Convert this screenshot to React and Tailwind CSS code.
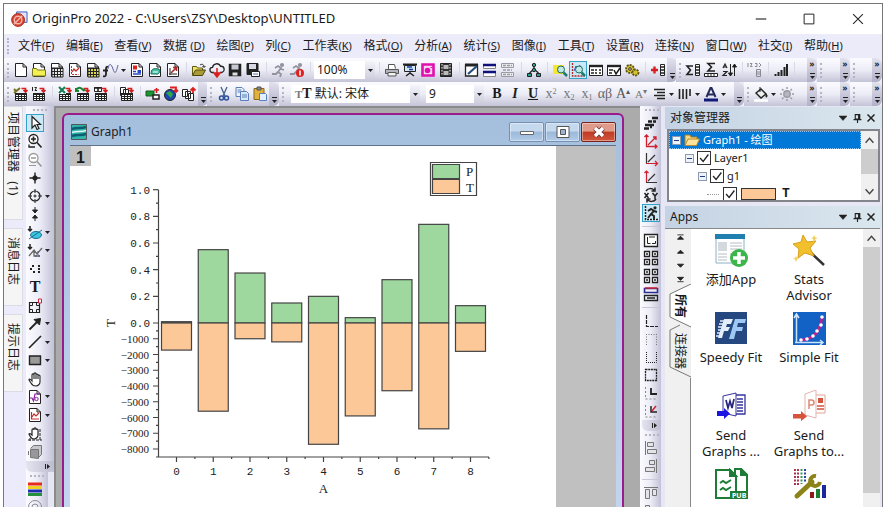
import { useState } from 'react'
import clsx from 'clsx'

const Ico = ({ children, className = 'h-4 w-4' }) => (
  <svg viewBox="0 0 16 16" className={clsx('shrink-0', className)} fill="none" stroke="#222" aria-hidden="true">
    {children}
  </svg>
)

// Pieces shared by several toolbar glyphs
const sheet = <path d="M2.500 1.500h7.500l3.500 3.500v9.500h-11zM10 1.500v3.500h3.500" fill="#fff" />
const table = (
  <g>
    <path d="M2.500 7.500h11v7h-11z" fill="#fff" />
    <path d="M2 8h12" strokeWidth="2" />
    <path d="M2.500 10.500h11M2.500 12.500h11M5.500 8v6M8.500 8v6M11.500 8v6" />
  </g>
)
const cells = <path d="M3 6.500h11M3 9.500h11M3 12.500h11M5.500 6v9M8.500 6v9M11.500 6v9" strokeWidth="1.200" />
const redHook = <path d="M8.500 2.500h4v3M10.500 4l2 2 2-2" stroke="#d81e1e" strokeWidth="1.600" />
const magnifier = (
  <g>
    <circle cx="9" cy="7.500" r="3.500" fill="#bfeae4" stroke="#1c6c64" />
    <path d="M11.500 10.500l3.500 3.500" stroke="#1c7c70" strokeWidth="2.500" />
  </g>
)
const runner = (
  <g stroke="#9393a0" strokeWidth="1.800">
    <circle cx="11" cy="3" r="1.200" fill="#9393a0" />
    <path d="M4 6l3-2 3 2-3 4 3 2-1 3M7 10l-2 2H1M10 7l3 1" />
  </g>
)

const icons = {
  newProject: sheet,
  newFolder: (
    <g>{sheet}<path d="M1.500 6.500h4l1 1.500h8v6h-13z" fill="#f4ef52" stroke="#777a20" /></g>
  ),
  newBook: <g>{sheet}<path d="M3 6h11v9H3z" fill="#fff" />{cells}</g>,
  newGraph: <g>{sheet}<path d="M4.500 4v8.500h7" stroke="#b33" strokeDasharray="2 1" /><path d="M5 10l2-3 2 2 3-3" stroke="#c03030" strokeWidth="1.300" /></g>,
  newMatrix: <g>{sheet}<path d="M3 6h11v9H3z" fill="#f2ee50" />{cells}</g>,
  newFunction: (
    <g>
      <path d="M5 5c-2-1-2 1-2 3v4c0 2-1 3-3 2M0 8.500h5" strokeWidth="1.800" />
      <path d="M5 7c1-6 3-6 5 0s3 4 5-4" stroke="#5b5f94" />
    </g>
  ),
  newLayout: (
    <g>{sheet}<path d="M4 3.500h4v4H4z" fill="#d22" stroke="none" /><path d="M8.500 8h3.500v3H8.500z" fill="#2748c8" stroke="none" /><path d="M4 9.500h3M4 12h8" stroke="#2748c8" strokeWidth="1.500" /></g>
  ),
  newNotes: <g>{sheet}<path d="M4 12c0-5 2-6 8-5 2 2 0 6-3 5z" fill="#4dbfa6" stroke="#15705f" /><path d="M6 10h5" stroke="#fff" /></g>,
  digitize: <g>{sheet}<path d="M5 13V6M4 12h8" /><path d="M6 11l5-5M8 5.500h3.500V9" stroke="#b02828" strokeWidth="1.600" /></g>,
  open: (
    <g><path d="M1.500 13V4.500h4l1 1.500h5v2" fill="#f1e36c" stroke="#5f5b12" /><path d="M1.500 13.500l3-5.500h10l-3 5.500z" fill="#a99b36" stroke="#4a470f" /><path d="M9 3c2-1.500 4-.500 4 2M11.500 4l1.500 1.500L14.500 4" /></g>
  ),
  cloud: (
    <g><path d="M5 10.500H3.500a2.600 2.600 0 010-5.200 4.200 4.200 0 018-1 3.100 3.100 0 011 6.200H11" strokeWidth="1.300" /><path d="M8 6v7M5 11l3 4 3-4z" stroke="#d81e1e" fill="#d81e1e" strokeWidth="1.500" /></g>
  ),
  save: <g><path d="M2.500 2.500h11v11h-11z" fill="#222" strokeWidth="1.500" /><path d="M4.500 2.500v5h7v-5z" fill="#c8c8d4" stroke="none" /><path d="M5.500 10.500h5v3h-5z" fill="#ddd" stroke="none" /></g>,
  saveAll: <g><path d="M2 1.500h11v11H2z" fill="#222" /><path d="M4 2v5h7V2z" fill="#d8d8e4" stroke="none" /><path d="M6.500 9.500h8v5h-8z" fill="#fff" /><path d="M8 12h5" stroke="#4a6bd0" /></g>,
  run: runner,
  stop: <g>{runner}<circle cx="11" cy="11" r="4" fill="#e02020" stroke="none" /><path d="M11 8.500v5" stroke="#fff" strokeWidth="1.500" /></g>,
  print: (
    <g><path d="M4.500 7V2.500h6l1 4" fill="#fff" stroke="#555" /><path d="M1.500 7.500h13v4h-13z" fill="#b5b5bf" stroke="#555" /><path d="M4 10.500h8v3.500H4z" fill="#f2f2f2" stroke="#555" /></g>
  ),
  slides: <g><path d="M1 2.500h14" strokeWidth="2" /><path d="M2.500 3.500h11v6h-11z" fill="#cfe6f7" /><path d="M5 5h5M7 7.500h4" stroke="#1c3c9c" strokeWidth="1.500" /><path d="M8 10v2M4 14l4-3 4 3" strokeWidth="1.500" /></g>,
  capture: <g><path d="M2.500 2.500h11v11h-11z" fill="#fbd8f2" stroke="#e010b0" strokeWidth="2.600" /><circle cx="7.500" cy="8.500" r="2.800" fill="#e010b0" stroke="none" /><path d="M10.500 5.500h2" stroke="#e010b0" /></g>,
  film: <g><path d="M2.500 1.500h11v13h-11z" fill="#333" /><path d="M5.500 3h5v4h-5zM5.500 9h5v4h-5z" fill="#bbb" stroke="none" /><path d="M4 2v12M12 2v12" stroke="#fff" strokeDasharray="1.500 1.500" /></g>,
  edit: <g><path d="M1.500 3h12v11h-12z" fill="#fff" strokeWidth="1.300" /><path d="M1 3h13" strokeWidth="3" /><path d="M4 12l9-8" stroke="#264b7b" strokeWidth="2.200" /></g>,
  bars: <g><path d="M1.500 2.500h12v4h-12zM1.500 10.500h12v4h-12z" fill="#fff" stroke="#888" /><path d="M1 3h13M1 10h13" stroke="#10107c" strokeWidth="2.500" /></g>,
  barsOff: <g stroke="#9a9aa6"><path d="M1.500 1.500h12v4h-12zM1.500 10.500h12v4h-12z" fill="#eee" /><path d="M3 3.500h9M3 8h9M3 12.500h9" strokeWidth="1.500" strokeDasharray="3 1" /></g>,
  tree: <g><path d="M8 4v4M3.500 11l4.500-4 4.500 4" strokeWidth="1.300" /><circle cx="8" cy="3" r="1.700" fill="#2aa08c" /><circle cx="8" cy="8" r="1.700" fill="#2aa08c" /><path d="M1.500 11.500h4v3h-4zM10.500 11.500h4v3h-4z" fill="#2aa08c" /></g>,
  findBook: <g><path d="M1 3h11v9H1z" fill="#f5e631" stroke="none" />{magnifier}</g>,
  zoomGraph: <g><path d="M2.500 1v13h12" stroke="#b02a2a" strokeWidth="1.300" strokeDasharray="2 1" /><path d="M4 9l2-5 2 3 2-4" stroke="#284fc0" />{magnifier}</g>,
  results: <g><path d="M1.500 3.500h13v10h-13z" fill="#fff" /><path d="M1 4h14" strokeWidth="2.400" /><path d="M3 8h3M7 8h2M11 8h2M3 11h3M7 11h2M11 11h2" strokeWidth="1.400" /></g>,
  script: <g><path d="M1.500 3.500h13v10h-13z" fill="#fff" /><path d="M1 4h14" strokeWidth="2.400" /><path d="M3 8h4M3 11h3" strokeWidth="1.400" /><path d="M8 8l2 4 4-6" stroke="#1c1c1c" strokeWidth="1.500" /></g>,
  gear: <g><circle cx="6" cy="7" r="4" fill="#d8c12e" stroke="#5c5414" strokeWidth="1.800" strokeDasharray="2 1" /><circle cx="6" cy="7" r="1.300" fill="#fff" /><circle cx="11.500" cy="10.500" r="3" fill="#d8c12e" stroke="#5c5414" strokeWidth="1.800" strokeDasharray="2 1" /></g>,
  addColumn: <g><path d="M1 8h7M4.500 4.500v7" stroke="#d81e1e" strokeWidth="2.400" /><path d="M10.500 2.500h4v11h-4z" fill="#fff" /><path d="M10 5h5M10 8h5M10 11h5" strokeWidth="1.300" /></g>,
  sumColumn: <g><path d="M8 4H2l3.500 4L2 12.500h6" strokeWidth="1.600" /><path d="M10.500 2.500h4v11h-4z" fill="#fff" /><path d="M10 5h5M10 8h5M10 11h5" strokeWidth="1.300" /></g>,
  sumRow: <g><path d="M12 1.500H5l3.500 3.500L5 9h7" strokeWidth="1.600" /><path d="M1.500 11.500h13v3h-13z" fill="#fff" /><path d="M5 11v4M8 11v4M11 11v4" /></g>,
  sort: <g><path d="M2 6l2-4 2 4M2.500 5h3M2 9.500h4l-4 4h4" strokeWidth="1.200" /><path d="M9.500 2v11M7.500 11l2 3 2-3zM13.500 3v11M11.500 5l2-3 2 3z" fill="#222" /></g>,
  rowNumber: <g stroke="#8a8a96"><path d="M1 1v4M3 1.500h2L3.500 4.500h2M8 1.500h2v3H8M12 1l2 2-2 2" /><path d="M9.500 7.500h4v7h-4zM9 10h5M9 12h5" /></g>,
  signal: <path d="M2.500 14v-2M5.500 14v-4M8.500 14V8M11.500 14V5M14 14V2" strokeWidth="2" />,

  wizard: <g>{table}<path d="M1 7l6-5M1 3l2 2" stroke="#77711b" strokeWidth="2" />{redHook}</g>,
  ascii: <g>{table}<path d="M1.500 1v4M3.500 1.500h2L4 4.500h2" />{redHook}</g>,
  excel: <g>{table}<path d="M1 1h8v7H1z" fill="#fff" stroke="none" /><path d="M2 1l6 6M8 1L2 7" stroke="#16805a" strokeWidth="2.200" />{redHook}</g>,
  database: <g>{table}<path d="M1 4c2-3 5-3 7 0M1 2v3h3M8 5l2-2" stroke="#188530" strokeWidth="2.200" />{redHook}</g>,
  webData: <g>{table}<path d="M1.500 1.500h7v4h-7z" fill="#fff" /><path d="M1 2h8M5 2v4" strokeWidth="1.600" />{redHook}</g>,
  multiple: <g><path d="M1.500 1.500h5v8h-5zM4.500 3.500h5v8h-5z" fill="#fff" />{table}{redHook}</g>,
  connector: <g><path d="M1 5h8v5H1z" fill="#1b9433" stroke="#165c20" /><path d="M8 9h6v4H8z" fill="#fff" strokeWidth="1.500" /><path d="M9 4h5M11.500 2v5" stroke="#d81e1e" strokeWidth="1.600" /></g>,
  globe: <g><circle cx="7" cy="9" r="5.500" fill="#1f46ae" /><path d="M3 7l4-2 3 3-2 4z" fill="#2ba847" stroke="none" /><path d="M7 1.500h6v4M11 4l2 2 2-2" stroke="#e02020" strokeWidth="1.800" /></g>,
  slidesOut: <g><path d="M1.500 3.500h5v7h-5zM4.500 5.500h5v7h-5zM7.500 7.500h5v7h-5z" fill="#fff" /><path d="M12 7V2M9.500 4.500L12 2l2.500 2.500" stroke="#e02020" strokeWidth="1.800" /></g>,
  cut: <g><path d="M5 1l4 9M11 1L7 10" stroke="#44608e" strokeWidth="1.300" /><circle cx="5.500" cy="12" r="2" stroke="#2c4f9c" strokeWidth="1.500" /><circle cx="10.500" cy="12" r="2" stroke="#2c4f9c" strokeWidth="1.500" /></g>,
  copy: <g stroke="#5b7fb8"><path d="M2 1.500h6l2 2v7H2z" fill="#eaf3ff" /><path d="M6.500 5.500h6l2 2v7h-8z" fill="#d6e7fc" /><path d="M8 9h5M8 11h5M3.500 4h4M3.500 6h3" /></g>,
  paste: <g><path d="M2 2.500h10v11H2z" fill="#e0b23c" stroke="#8c6a1a" /><path d="M5 1h4v3H5z" fill="#888" stroke="#555" /><path d="M7.500 7.500h6l1 1v6h-7z" fill="#e4efff" stroke="#5b7fb8" /></g>,
  align: <path d="M3 3.500h11M6 6.500h8M3 9.500h11M6 12.500h8" strokeWidth="1.600" />,
  columns: <path d="M2.500 3v10M6 3v10M9.500 3v10M13 3v7" strokeWidth="1.600" />,
  fontColor: <g><path d="M3.500 11L7.500 2h1l4 9M5 8.500h6" stroke="#222a5a" strokeWidth="2" /><path d="M1 14h14" stroke="#111a78" strokeWidth="3" /></g>,
  fill: <g><path d="M3 7l5-4 5 5-5 4z" fill="#eee" strokeWidth="1.400" /><path d="M7 6V1M13 8c2 2 1 3 0 3z" fill="#222" /><path d="M1 14.500h14" stroke="#fff" strokeWidth="2.500" /></g>,
  light: <g stroke="#9a9aa4" strokeWidth="1.400"><circle cx="8" cy="8" r="3.200" fill="#b6b6c0" /><path d="M8 1v2M8 13v2M1 8h2M13 8h2M3 3l1.500 1.500M11.500 11.500L13 13M13 3l-1.500 1.500M4.500 11.500L3 13" /></g>,

  pointer: <path d="M5 1.500v11.500l3-3 2 4.500 2-1-2-4h3.500z" fill="#fff" strokeWidth="1.200" />,
  zoomIn: <g><circle cx="6.500" cy="6" r="4.500" strokeWidth="1.300" fill="#fff" /><path d="M4 6h5M6.500 3.500v5M10 9.500l4.500 5" strokeWidth="1.600" /><path d="M2 11.500v2.500h6" strokeWidth="1.300" /></g>,
  zoomOut: <g stroke="#999"><circle cx="6.500" cy="6" r="4.500" strokeWidth="1.300" fill="#fff" /><path d="M4 6h5M10 9.500l4.500 5" strokeWidth="1.600" /><path d="M2 13.500h7" /></g>,
  cross: <g><path d="M8 2.500v11M2.500 8h11" strokeWidth="1.400" /><circle cx="8" cy="8" r="2.200" fill="#222" /></g>,
  target: <g><circle cx="8" cy="8" r="5" strokeWidth="1.200" /><path d="M8 1v4M8 11v4M1 8h4M11 8h4M6.500 8h3M8 6.500v3" /></g>,
  collapse: <g fill="#222"><path d="M8 1v5M5.500 4L8 7l2.500-3zM8 15v-5M5.500 12L8 9l2.500 3z" /></g>,
  mask: <g><path d="M3 1v5M1 4l2 2 2-2" strokeWidth="1.500" /><ellipse cx="9" cy="10" rx="5.500" ry="3.500" fill="#3cc4dc" stroke="#1a6f94" /><path d="M2 14L15 5" stroke="#1a6f94" /></g>,
  region: <g><path d="M3 1v5M1 4l2 2 2-2" strokeWidth="1.500" /><path d="M2 13l5-6 3 4 5-6M7 7v6h6" stroke="#666" strokeWidth="1.300" /><path d="M8 13h6M11 8v4" stroke="#4b5180" strokeDasharray="2 1" /></g>,
  points: <path d="M5 5h2M3 8h2M6 11h2M11 5h2M11 8h2M11 11h2" strokeWidth="1.800" />,
  dataBox: <g><path d="M2.500 4.500h10v10h-10z" strokeWidth="1.200" /><path d="M5.500 5v2.500H3M9.500 5v2.500h3M5.500 14v-2.500H3M9.500 14v-2.500h3" /><path d="M11.500 1h3v4h-3z" fill="#fff" stroke="#d02040" /></g>,
  arrow: <g><path d="M2.500 13.500L11 5" strokeWidth="1.800" /><path d="M7 3.500l6.500-1-1 6.500z" fill="#222" /></g>,
  line: <path d="M2 14L14 2" strokeWidth="1.600" />,
  rect: <path d="M2.500 4h11v8.500h-11z" fill="#9a9a9a" strokeWidth="1.400" />,
  hand: <path d="M5 8V4c0-1.500 2-1.500 2 0V3c0-1.500 2-1.500 2 0v1c0-1.500 2-1 2 0v1c0-1.500 2-1 2 0v6c0 2-2 4-4 4s-4-1-5-3L2 9c0-1.500 1.500-1 3 1zM7 4v4M9 4v4M11 5v3" fill="#fff" strokeWidth="1.100" />,
  formula: <g>{sheet}<path d="M3 9h2l1.500 3L8 5h5" stroke="#8a20a0" strokeWidth="1.200" /><circle cx="9.500" cy="10" r="1.700" stroke="#8a20a0" /></g>,
  insertGraph: <g>{sheet}<path d="M4.500 5v7h7.500M5 10l2-3 2 2 3-3" stroke="#c03030" strokeWidth="1.200" /></g>,
  grab: <g><path d="M5 8V4c0-1.500 2-1.500 2 0V3c0-1.500 2-1.500 2 0v1c0-1.500 2-1 2 0v5c0 2-2 4-4 4s-3-1-4-3l-1-2c1-1 2 0 3 1z" fill="#fff" strokeWidth="1.200" /><path d="M1 14h14M13 3v12M3 15v-3" strokeDasharray="3 1" /></g>,
  cube: <g stroke="#777"><path d="M3.500 4.500l3-3h8v9l-3 3" fill="#c8c8cc" /><path d="M3.500 5.500h8v9l-8-1z" fill="#98989c" /><path d="M1.500 7v4" /></g>,
  palette: <g strokeWidth="3"><path d="M1 3h14" stroke="#e82a1a" /><path d="M1 6.500h14" stroke="#f0d020" /><path d="M1 10h14" stroke="#1d2fae" /><path d="M1 13.500h14" stroke="#26903e" /></g>,
  ring: <g stroke="#8b8b96"><circle cx="8" cy="8" r="6.500" /><circle cx="8" cy="8" r="3" /></g>,

  stair: <path d="M1 13.500h5M3 10h5M8 10h3M2 10h3M5 6.500h4M10 6.500h3M9 3h6M7 12h2" strokeWidth="2.600" />,
  axesXY: <g stroke="#d02030" strokeWidth="1.300"><path d="M3.500 14V2M1.500 4l2-2 2 2M3 13.500h11M12 11.500l2 2-2 2M5 12l8-8M10 4h3v3" /></g>,
  axesX: <g strokeWidth="1.200"><path d="M3.500 2v10M5 11l7-7" stroke="#333" /><path d="M3 12.500h11M12 10l2.500 2.500L12 15" stroke="#d02030" /></g>,
  axesY: <g strokeWidth="1.200"><path d="M3 13.500h11M5 12l7-7" stroke="#333" /><path d="M3.500 13V2M1.500 4l2-2 2 2" stroke="#d02030" /></g>,
  swap: <g strokeWidth="1.500"><path d="M3 4c2-3 6-3 8-1M12 .500v3.500H8.500M13 12c-2 3-6 3-8 1M4 15.500v-3.500h3.500" /><path d="M1.500 6l4 5M5.500 6l-4 5M9.500 6l2.500 3 2.500-3M12 9v3" /></g>,
  fastRun: <g><path d="M2.500 1v13.500h13" strokeWidth="1.500" strokeDasharray="2 1" /><path d="M5 6l3-2 3 2-3 3 3 2v3M8 9l-3 4M11 6l3 1" strokeWidth="1.900" /><circle cx="12" cy="2.800" r="1.600" fill="#222" stroke="none" /></g>,
  layer1: <g><path d="M1.500 2.500h13v12h-13z" fill="#fff" strokeWidth="1.300" /><path d="M4.500 5v6.500h3M9 11.500h3.500V9M6 5h6" /></g>,
  layer4: <g><path d="M1.500 1.500h5v5h-5zM9.500 1.500h5v5h-5zM1.500 9.500h5v5h-5zM9.500 9.500h5v5h-5z" fill="#fff" strokeWidth="1.300" /><path d="M3 4h2M11 4h2M3 12h2M11 12h2" strokeWidth="1.500" /></g>,
  merge: <g><path d="M1.500 2.500h13v4h-13z" fill="#eee" stroke="#2c2c94" strokeWidth="1.600" /><path d="M2 2h12" stroke="#d02030" strokeWidth="1.500" /><path d="M1.500 9.500h13v5h-13zM4 12h8" strokeWidth="1.300" /></g>,
  axisLB: <path d="M3.500 2v11.500H15" strokeWidth="1.200" strokeDasharray="4 1" />,
  axisTL: <path d="M3 3.500h11M3.500 3v11M13.500 3v11" stroke="#777" strokeDasharray="1 1.500" />,
  axisRB: <path d="M3 13.500h10.500V2M3.500 3v10" strokeDasharray="1 1" />,
  axisAll: <path d="M2.500 2.500h11v11h-11z" strokeWidth="1.300" strokeDasharray="2 .700" />,
  inset: <g><path d="M2.500 2v12h12" stroke="#888" strokeDasharray="2 2" /><path d="M8 3v6h6" strokeWidth="1.800" /></g>,
  insetRed: <g><path d="M2.500 2v12h12" stroke="#888" strokeDasharray="2 2" /><path d="M8 3v6h6" strokeWidth="1.500" /><path d="M9 8l4-5" stroke="#d02030" strokeWidth="1.500" /></g>,
  alignLeft: <g stroke="#777"><path d="M2.500 1v14" /><path d="M4.500 2.500h6v4h-6zM4.500 9.500h9v4h-9z" fill="#e4e4e8" /></g>,
  alignRight: <g stroke="#777"><path d="M13.500 1v14" /><path d="M6.500 2.500h5v4h-5zM2.500 9.500h9v4h-9z" fill="#e4e4e8" /></g>,
  alignTop: <g stroke="#777"><path d="M1 2.500h14" /><path d="M2.500 4.500h4v9h-4zM9.500 4.500h4v6h-4z" fill="#e4e4e8" /></g>,
  alignBottom: <g stroke="#777"><path d="M1 13.500h14" /><path d="M2.500 2.500h4v9h-4zM9.500 5.500h4v6h-4z" fill="#e4e4e8" /></g>,
}

const menus = [
  ['文件', 'F'], ['编辑', 'E'], ['查看', 'V'], ['数据 ', 'D'], ['绘图', 'P'], ['列', 'C'],
  ['工作表', 'K'], ['格式', 'O'], ['分析', 'A'], ['统计', 'S'], ['图像', 'I'], ['工具', 'T'],
  ['设置', 'R'], ['连接', 'N'], ['窗口', 'W'], ['社交', 'I'], ['帮助', 'H'],
]

const Arrow = () => (
  <svg viewBox="0 0 5 3" className="h-[3px] w-[5px] shrink-0" aria-hidden="true"><path d="M0 0h5L2.500 3z" fill="#222" /></svg>
)

const Tool = ({ name, active, menu, children }) => (
  <button
    type="button"
    aria-label={name}
    className={clsx('flex h-[18px] shrink-0 items-center', menu ? 'w-[26px] gap-px' : 'w-[18px]')}
  >
    <span className={clsx('flex h-[18px] w-[18px] items-center justify-center', active && 'border border-[#35a0c8] bg-[#cbe8f6]')}>
      {children || <Ico>{icons[name]}</Ico>}
    </span>
    {menu && <Arrow />}
  </button>
)

const TextTool = ({ name, className, children }) => (
  <Tool name={name}>
    <span className={clsx("font-['Liberation_Serif',serif] text-sm leading-4", className)}>{children}</span>
  </Tool>
)

const Sep = () => (
  <span className="flex h-4 w-2 shrink-0 justify-center"><span className="w-px bg-[#d8d8e6]" /></span>
)

const Tools = ({ names }) => names.map((name, i) => (name === '|' ? <Sep key={i} /> : <Tool key={i} name={name} />))

const ToolGroup = ({ className, double, children }) => (
  <div className={clsx('flex items-center rounded-r-md bg-linear-to-b from-[#fbfbff] via-[#ececf6] to-[#c4c4d8]', className)}>
    <span className="mx-[3px] h-[15px] w-0.5 shrink-0 border-l-2 border-dotted border-[#b4b4c4]" />
    {children}
    <button type="button" aria-label="更多" className="ml-auto flex h-full w-[10px] shrink-0 flex-col items-center justify-end gap-0.5 rounded-r-md bg-linear-to-b from-[#e2e2ee] to-[#b0b0c8] pb-[3px]">
      {double && <span className="mb-auto pt-0.5 text-[8px] leading-[8px] font-bold">»</span>}
      <span className="h-px w-[5px] bg-[#222]" />
      <Arrow />
    </button>
  </div>
)

const Combo = ({ label, value, className, icon }) => (
  <label className={clsx('flex h-[18px] shrink-0 items-center bg-white', className)}>
    {icon}
    <select aria-label={label} className="h-full min-w-0 flex-1 appearance-none bg-transparent px-[3px] text-xs leading-[18px] outline-none">
      <option>{value}</option>
    </select>
    <span className="flex h-full w-[10px] items-center justify-center bg-linear-to-b from-[#f4f4fa] to-[#cecede]"><Arrow /></span>
  </label>
)

const Toolbars = () => (
  <div className="shrink-0 bg-[#ececfa]">
    <div className="flex h-6">
      <ToolGroup className="min-w-0 flex-1">
        <Tools names={['newProject', 'newFolder', 'newBook', 'newGraph', 'newMatrix']} />
        <Tool name="newFunction" menu />
        <Tools names={['newLayout', 'newNotes', 'digitize', '|', 'open', 'cloud', 'save', 'saveAll', '|', 'run', 'stop', '|']} />
        <Combo label="缩放" value="100%" className="w-[61px]" />
        <Tools names={['|', 'print', 'slides', 'capture', 'film', '|', 'edit', 'bars', 'barsOff', '|', 'tree', '|', 'findBook']} />
        <Tool name="zoomGraph" active />
        <Tools names={['results', 'script', 'gear', '|', 'addColumn']} />
      </ToolGroup>
      <ToolGroup className="w-[141px]" double>
        <Tools names={['sumColumn', 'sumRow', 'sort', '|', 'rowNumber', '|', 'signal', '|']} />
      </ToolGroup>
      <ToolGroup className="w-[33px]" double />
      <ToolGroup className="w-[32px]" double />
    </div>
    <div className="flex h-6">
      <ToolGroup className="w-[203px]">
        <Tools names={['wizard', 'ascii', '|', 'excel', 'database', 'webData', '|', 'multiple', '|', 'connector', 'globe', 'slidesOut']} />
      </ToolGroup>
      <ToolGroup className="w-[72px]">
        <Tools names={['cut', 'copy', 'paste']} />
      </ToolGroup>
      <ToolGroup className="min-w-0 flex-1">
        <div className="mr-1 ml-1 flex shrink-0 gap-1.5">
          <Combo
            label="字体"
            value="默认: 宋体"
            className="w-[129px]"
            icon={<span className="pl-1 font-['Liberation_Serif',serif] text-sm leading-4 font-bold"><span className="text-[11px] text-[#777]">T</span>T</span>}
          />
          <Combo label="字号" value="9" className="w-[58px]" />
        </div>
        <TextTool name="粗体" className="font-bold">B</TextTool>
        <TextTool name="斜体" className="font-bold italic">I</TextTool>
        <TextTool name="下划线" className="font-bold underline">U</TextTool>
        <TextTool name="上标" className="text-[#777]">x<sup className="text-[8px]">2</sup></TextTool>
        <TextTool name="下标" className="text-[#777]">x<sub className="text-[8px]">2</sub></TextTool>
        <TextTool name="上下标" className="text-[#777]">x<sub className="text-[8px]">1</sub></TextTool>
        <TextTool name="希腊字母" className="text-[#666]">αβ</TextTool>
        <TextTool name="增大字号" className="text-[#555]">A<sup className="text-[8px]">▴</sup></TextTool>
        <TextTool name="减小字号" className="text-[#777]"><span className="text-[11px]">A</span><sup className="text-[8px]">▾</sup></TextTool>
        <Tool name="align" menu />
        <Tool name="columns" menu />
        <Tool name="fontColor" menu />
      </ToolGroup>
      <ToolGroup className="w-[73px]" double>
        <Tool name="fill" menu />
        <Tool name="light" />
      </ToolGroup>
      <ToolGroup className="w-[33px]" double />
      <ToolGroup className="w-[32px]" double />
    </div>
  </div>
)

const TitleBar = () => (
  <header className="flex h-[30px] shrink-0 items-center bg-white pl-[7px]">
    <svg viewBox="0 0 18 18" className="mr-1 h-[17px] w-[17px]" aria-hidden="true">
      <path d="M6 1h11v11H6z" fill="#dfe6fb" stroke="#3a55b8" />
      <circle cx="7.500" cy="9.500" r="6.800" fill="#d8442f" stroke="#a32b1d" />
      <circle cx="7.500" cy="9.500" r="4" fill="none" stroke="#f2b7ad" strokeWidth="1.500" />
      <path d="M3 14L12 5" stroke="#f2b7ad" strokeWidth="1.500" />
    </svg>
    <h1 className="text-[13px]">OriginPro 2022 - C:\Users\ZSY\Desktop\UNTITLED</h1>
    <div className="ml-auto flex h-full">
      <button type="button" aria-label="最小化" className="grid w-12 place-items-center"><Ico className="h-3 w-3"><path d="M1 8h14" strokeWidth="1.500" /></Ico></button>
      <button type="button" aria-label="最大化" className="grid w-12 place-items-center"><Ico className="h-3 w-3"><path d="M1.500 1.500h13v13h-13z" strokeWidth="1.300" /></Ico></button>
      <button type="button" aria-label="关闭" className="grid w-[49px] place-items-center"><Ico className="h-3 w-3"><path d="M1.500 1.500l13 13M14.500 1.500l-13 13" strokeWidth="1.400" /></Ico></button>
    </div>
  </header>
)

const MenuBar = () => (
  <nav className="flex h-6 shrink-0 items-center bg-[#ebebfa]">
    <span className="mr-[9px] ml-[3px] h-4 border-l-2 border-dotted border-[#b4b4c4]" />
    <div className="flex max-w-[825px] flex-1 justify-between text-xs">
      {menus.map(([label, key], i) => (
        <button key={i} type="button" className="whitespace-pre">
          {label}<span className="text-[11px]">(<u>{key}</u>)</span>
        </button>
      ))}
    </div>
  </nav>
)

const DockTab = ({ className, children }) => (
  <button
    type="button"
    className={clsx('flex w-[19px] items-center border border-l-0 border-[#dcdce4] bg-[#f5f5f5] text-xs leading-[18px] whitespace-pre [text-orientation:sideways] [writing-mode:vertical-rl]', className)}
  >
    {children}
  </button>
)

const StripGrip = () => <span className="my-[3px] w-[14px] shrink-0 self-center border-t-2 border-dotted border-[#b4b4c4]" />

const StripEnd = () => (
  <button type="button" aria-label="更多" className="flex h-[11px] shrink-0 items-center justify-end gap-px rounded-b-md bg-linear-to-r from-[#e4e4f0] to-[#bcbcd0] pr-1">
    <span className="h-[5px] w-px bg-[#222]" />
    <svg viewBox="0 0 3 5" className="h-[5px] w-[3px]"><path d="M0 0v5l3-2.500z" fill="#222" /></svg>
  </button>
)

const strip = 'flex flex-col bg-linear-to-r from-[#fbfbff] via-[#ececf6] to-[#c2c2d8]'
const leftTools = [
  ['pointer'], ['zoomIn'], ['zoomOut'], ['cross'], ['target', true], ['collapse'], ['mask', true],
  ['region', true], ['points'], ['T'], ['dataBox'], ['arrow', true], ['line', true], ['rect', true],
  ['hand'], ['formula', true], ['insertGraph', true], ['grab'], ['cube'],
]

const LeftTools = () => (
  <div className="flex w-7 shrink-0 flex-col overflow-hidden">
    <div className={strip}>
      <StripGrip />
      <div className="flex h-[347px] flex-col justify-between">
        {leftTools.map(([name, menu]) => (
          <Tool key={name} name={name} menu={menu} active={name === 'pointer'}>
            {name === 'T' && <span className="font-['Liberation_Serif',serif] text-base leading-4 font-bold">T</span>}
          </Tool>
        ))}
      </div>
      <StripEnd />
    </div>
    <div className={clsx(strip, 'w-[22px] flex-1')}>
      <StripGrip />
      <Tools names={['palette', 'ring']} />
    </div>
  </div>
)

const RightTools = () => (
  <div className="flex w-[21px] shrink-0 flex-col overflow-hidden">
    <div className={clsx(strip, 'pl-0.5')}>
      <StripGrip />
      <Tools names={['stair', 'axesXY', 'axesX', 'axesY', 'swap']} />
      <Tool name="fastRun" active />
      <span className="my-1 h-px w-[18px] bg-[#c8c8d8]" />
      <Tools names={['layer1', 'layer4', 'layer4', 'merge']} />
      <span className="my-1 h-px w-[18px] bg-[#c8c8d8]" />
      <Tools names={['axisLB', 'axisTL', 'axisRB', 'axisAll', 'inset', 'insetRed']} />
      <StripEnd />
    </div>
    <div className={clsx(strip, 'flex-1 pl-0.5')}>
      <StripGrip />
      <Tools names={['alignLeft', 'alignRight']} />
      <span className="my-1 h-px w-[18px] bg-[#c8c8d8]" />
      <Tools names={['alignTop', 'alignBottom']} />
    </div>
  </div>
)

// p is drawn upward on the 0-1 scale, t downward in thousands
const series = [
  { p: 0.01, t: 1720 }, { p: 0.55, t: 5600 }, { p: 0.375, t: 1000 },
  { p: 0.15, t: 1200 }, { p: 0.2, t: 7700 }, { p: 0.04, t: 5900 },
  { p: 0.325, t: 4300 }, { p: 0.74, t: 6720 }, { p: 0.13, t: 1800 },
]
const ZERO = 177
const UP = 133.3
const DOWN = 0.01575
const xAt = (i) => 106.5 + i * 36.75

const Chart = () => (
  <svg width="486" height="362" className="block shrink-0 bg-white" role="img" aria-label="Graph1">
    <g stroke="#444" strokeWidth="1.200">
      {series.map(({ p, t }, i) => (
        <g key={i}>
          <rect x={xAt(i) - 15} y={ZERO - p * UP} width="30" height={p * UP} fill="#9fd89f" />
          <rect x={xAt(i) - 15} y={ZERO} width="30" height={t * DOWN} fill="#fdc898" />
          <path d={`M${xAt(i)} 311v5`} />
          <path d={`M${xAt(i) + 18.375} 311v2`} />
        </g>
      ))}
      <path d="M88.500 43.500V311M88 311h331M86 311h2" fill="none" />
      {[0, 1, 2, 3, 4, 5].map((n) => (
        <path key={n} d={`M83 ${ZERO - n * 26.66}h5${n < 5 ? `M86 ${ZERO - n * 26.66 - 13.33}h2` : ''}`} />
      ))}
      {[1, 2, 3, 4, 5, 6, 7, 8].map((n) => (
        <path key={n} d={`M83 ${ZERO + n * 15.75}h5M86 ${ZERO + n * 15.75 - 7.9}h2`} />
      ))}
      <path d="M360.500 16.500h46v33h-46z" fill="#fff" />
      <path d="M362.500 18.500h27v14h-27z" fill="#9fd89f" />
      <path d="M362.500 33.500h27v14h-27z" fill="#fdc898" />
    </g>
    <g className="fill-[#222] font-['Liberation_Mono',monospace] text-[11px]">
      {[0, 1, 2, 3, 4, 5].map((n) => (
        <text key={n} x="80" y={ZERO - n * 26.66 + 4} textAnchor="end">{(n / 5).toFixed(1)}</text>
      ))}
      {series.map((_, i) => <text key={i} x={xAt(i)} y="329" textAnchor="middle">{i}</text>)}
    </g>
    <g className="fill-[#222] font-['Liberation_Serif',serif] text-[11px]">
      {[1, 2, 3, 4, 5, 6, 7, 8].map((n) => (
        <text key={n} x="79" y={ZERO + n * 15.75 + 4} textAnchor="end">−{n}000</text>
      ))}
    </g>
    <g className="fill-[#222] font-['Liberation_Serif',serif] text-[13px]">
      <text x="253.500" y="347" textAnchor="middle">A</text>
      <text x="45" y="177" textAnchor="middle" transform="rotate(-90 45 177)">T</text>
      <text x="396" y="30">P</text>
      <text x="396" y="46">T</text>
    </g>
  </svg>
)

const WinButton = ({ label, danger, children }) => (
  <button
    type="button"
    aria-label={label}
    className={clsx(
      'grid h-5 w-[35px] place-items-center rounded-xs border shadow-[inset_0_0_0_1px_#ffffff66]',
      danger
        ? 'border-[#7b2218] bg-linear-to-b from-[#e09a8a] from-45% via-[#c03a22] via-50% to-[#d0573c]'
        : 'border-[#7590b0] bg-linear-to-b from-[#c4d8ee] from-45% via-[#9cb9da] via-50% to-[#b2cbe8]'
    )}
  >
    <Ico>{children}</Ico>
  </button>
)

const GraphWindow = () => (
  <section className="flex min-h-0 flex-1 flex-col rounded-t-md border-2 border-b-0 border-[#9b1a8c] bg-linear-to-b from-[#a4bfdd] to-[#c3d4ee] px-1.5">
    <div className="flex h-[30px] shrink-0 items-center gap-1 pt-1 pl-px">
      <svg viewBox="0 0 16 16" className="h-4 w-4" aria-hidden="true">
        <path d="M.500 .500h15v15H.500z" fill="#2fb7ae" stroke="#555" />
        <path d="M1 5c5-2 9 0 14-2M1 12c5-2 9 0 14-2" stroke="#0d5f70" strokeWidth="2.500" />
        <path d="M1 8.500c5-2 9 0 14-2" stroke="#e4f6f4" strokeWidth="1.500" />
      </svg>
      <h2 className="text-xs text-[#222]">Graph1</h2>
      <div className="ml-auto flex gap-px">
        <WinButton label="最小化"><path d="M1.500 7.500h13v3h-13z" fill="#fff" stroke="#666" /></WinButton>
        <WinButton label="最大化"><path d="M2 2.500h12v11H2z" fill="#fff" stroke="#555" /><path d="M5.500 5.500h5v5h-5z" fill="#9ab4d2" stroke="#555" /></WinButton>
        <WinButton label="关闭" danger><path d="M4 4l8 8M12 4l-8 8" stroke="#633" strokeWidth="5" /><path d="M4 4l8 8M12 4l-8 8" stroke="#fff" strokeWidth="3.400" /></WinButton>
      </div>
    </div>
    <div className="relative flex min-h-0 flex-1 overflow-hidden border-t border-[#5f7088] bg-[#c0c0c0]">
      <Chart />
      <span className="absolute top-0 left-0 grid h-5 w-[21px] place-items-center bg-[#bfbfbf] font-['Liberation_Sans',sans-serif] text-base font-bold">1</span>
    </div>
  </section>
)

const PanelHeader = ({ title }) => (
  <div className="flex h-[22px] shrink-0 items-center bg-linear-to-r from-[#c4d3e4] to-[#dbe7ee] px-[5px] text-xs">
    <h2>{title}</h2>
    <div className="ml-auto flex gap-0.5">
      <button type="button" aria-label="菜单" className="grid h-3 w-3 place-items-center"><Ico className="h-2 w-2"><path d="M0 4h16l-8 9z" fill="#222" /></Ico></button>
      <button type="button" aria-label="固定" className="grid h-3 w-3 place-items-center"><Ico className="h-[9px] w-[9px]"><path d="M4 1h8v8H4zM10 1v8M1 10h14M8 10v6" strokeWidth="2" /></Ico></button>
      <button type="button" aria-label="关闭" className="grid h-3 w-3 place-items-center"><Ico className="h-2 w-2"><path d="M1 1l14 14M15 1L1 15" strokeWidth="3" /></Ico></button>
    </div>
  </div>
)

const Chevron = ({ down }) => (
  <span className="grid h-[18px] w-full shrink-0 place-items-center bg-[#f0f0f0]">
    <Ico className="h-[9px] w-[9px]"><path d={down ? 'M1 4l7 8 7-8' : 'M1 12l7-8 7 8'} stroke="#444" strokeWidth="2.500" /></Ico>
  </span>
)

const Check = ({ label }) => {
  const [on, setOn] = useState(true)
  return (
    <span className="grid h-[14px] w-[14px] shrink-0">
      <input
        type="checkbox"
        aria-label={label}
        checked={on}
        onChange={(event) => setOn(event.target.checked)}
        className="col-start-1 row-start-1 h-[14px] w-[14px] appearance-none border border-[#333] bg-white"
      />
      {on && (
        <Ico className="pointer-events-none col-start-1 row-start-1 h-[14px] w-[14px]"><path d="M3.500 8l3.500 4 6-8" strokeWidth="1.500" /></Ico>
      )}
    </span>
  )
}

const Minus = () => (
  <span className="grid h-[9px] w-[9px] shrink-0 place-items-center border border-[#8c9bb0] bg-[#eef3fa]"><span className="h-px w-[5px] bg-[#1d3c82]" /></span>
)

const ObjectManager = () => (
  <section className="shrink-0">
    <PanelHeader title="对象管理器" />
    <div className="mx-0.5 flex h-[73px] border-2 border-[#84848c] bg-white text-[11px]">
      <div className="min-w-0 flex-1 overflow-hidden">
        <div className="flex h-[18px] items-center gap-[3px] bg-[#0078d7] pl-[3px] text-white outline outline-dotted -outline-offset-1 outline-[#8fc6f4]">
          <Minus />
          <svg viewBox="0 0 16 14" className="h-[14px] w-4" aria-hidden="true">
            <path d="M1 12V2h5l1 2h6v3" fill="#f5d886" stroke="#a97c22" />
            <path d="M1 12.500L4 6h11.500l-3 6.500z" fill="#fbe39b" stroke="#b98a2c" />
          </svg>
          Graph1 - 绘图
        </div>
        <div className="flex h-[18px] items-center gap-[3px] pl-4"><Minus /><Check label="Layer1" />Layer1</div>
        <div className="flex h-[18px] items-center gap-[3px] pl-[29px]"><Minus /><Check label="g1" />g1</div>
        <div className="flex h-[18px] items-center gap-1 pl-[38px]">
          <span className="w-3 border-t border-dotted border-[#999]" />
          <Check label="T" />
          <span className="h-3 w-[35px] border border-[#333] bg-[#fdc898]" />
          <span className="pl-0.5 font-['Liberation_Mono',monospace] text-[13px] font-bold">T</span>
        </div>
      </div>
      <div className="flex w-[17px] flex-col bg-[#f0f0f0]">
        <Chevron />
        <span className="h-[25px] bg-[#cdcdcd]" />
        <span className="mt-auto"><Chevron down /></span>
      </div>
    </div>
  </section>
)

const apps = [
  {
    label: '添加App',
    icon: (
      <g>
        <path d="M1 1h28v28H1z" fill="#fff" stroke="#8cb0c4" /><path d="M0 0h30v5H0z" fill="#1f7fae" />
        <path d="M3 8h9v9H3z" fill="#d4d9de" /><path d="M15 9h12M15 12h12M15 15h12M3 20h9M3 23h9M3 26h9M15 20h6" stroke="#b5bcc4" />
        <circle cx="24" cy="24" r="9" fill="#3cb54a" /><path d="M18 24h12M24 18v12" stroke="#fff" strokeWidth="3.500" />
      </g>
    ),
  },
  {
    label: 'Stats\nAdvisor',
    icon: (
      <g>
        <path d="M16 17l15 14" stroke="#333" strokeWidth="2.500" />
        <path d="M10 1l4 7 9-1-6 7 4 8-9-3-7 5 1-9-6-5 8-2z" fill="#f1c02c" stroke="#d89e1c" />
        <path d="M21 1l1.500 2.500L25 4l-2.500 1L21 8l-1-3-2-1 2-.500zM3 22l1 2 2 .500-2 1L3 28l-1-2.500-2-1L2 24z" fill="#f3cf5a" />
      </g>
    ),
  },
  {
    label: 'Speedy Fit',
    icon: (
      <g>
        <path d="M0 0h32v32H0z" fill="#24487f" />
        <path d="M9 7h9l-2 5h-4l-1 3h4l-2 4h-4l-2 7H3z" fill="#e4eefa" />
        <path d="M5 9h7M4 12h7M3 15h7M3 18h6M2 21h6M1 24h6" stroke="#e4eefa" strokeWidth="1.300" />
        <path d="M20 7h11l-1 4h-7l-1 4h6l-1 4h-6l-2 8h-5z" fill="#9ec9f4" />
      </g>
    ),
  },
  {
    label: 'Simple Fit',
    icon: (
      <g>
        <path d="M0 0h33v33H0z" fill="#1261c4" /><path d="M3.500 31V3M1 6l2.500-4L6 6M2 30.500h28M27 28l3 2.500-3 2.500" stroke="#cfe4fa" strokeWidth="1.500" fill="none" />
        <path d="M7 28c12 0 20-6 22-23" stroke="#c0208c" strokeWidth="2.500" fill="none" />
        <g fill="#fff"><circle cx="8" cy="28" r="1.800" /><circle cx="14" cy="27" r="1.800" /><circle cx="20" cy="24" r="1.800" /><circle cx="24" cy="19" r="1.800" /><circle cx="28" cy="13" r="1.800" /><circle cx="29" cy="5" r="1.800" /></g>
      </g>
    ),
  },
  {
    label: 'Send\nGraphs ...',
    icon: (
      <g>
        <path d="M20 5h10v19H20M22 9h6M22 12h6M22 15h6M22 18h6M22 21h6" stroke="#35349c" strokeWidth="1.300" fill="none" />
        <path d="M8 6l13-3v23L8 23z" fill="#fff" stroke="#35349c" /><path d="M11 10l2 8 2-7 2 7 2-9" fill="none" stroke="#26257f" strokeWidth="1.700" />
        <path d="M2 21h7v-3l6 5.500-6 5.500v-3H2z" fill="#1c14e0" />
      </g>
    ),
  },
  {
    label: 'Send\nGraphs to...',
    icon: (
      <g>
        <path d="M22 5h10v18H22" fill="none" stroke="#e0a49a" /><path d="M25 8h5v5h-5z" fill="#d2553d" /><path d="M24 16h7M24 19h7" stroke="#d2553d" strokeWidth="1.500" />
        <path d="M12 4l11-4v28l-11-3z" fill="#fff" stroke="#e3b5ad" /><path d="M16 19v-9h2.500a2.500 2.500 0 010 5H16" fill="none" stroke="#dd8878" strokeWidth="1.500" />
        <path d="M0 24h8v-3l6 5.500L8 31v-2.500H0z" fill="#d5543a" />
      </g>
    ),
  },
  {
    name: 'PUB',
    icon: (
      <g fill="#fff" stroke="#1d7d36" strokeWidth="2">
        <path d="M20 1h6l6 6v20H20z" /><path d="M26 1v6h6z" fill="#1d7d36" /><path d="M1 2h14l6 6v22H1z" /><path d="M15 2v6h6z" fill="#1d7d36" />
        <path d="M5 15l3-2 3 2 5-3M5 22l3-2 3 2 5-3" fill="none" /><path d="M16 24h16v6H16z" fill="#1d7d36" />
        <text x="17" y="30" fontSize="7" fontWeight="bold" fill="#fff" stroke="none">PUB</text>
      </g>
    ),
  },
  {
    name: 'Tools',
    icon: (
      <g>
        <path d="M2 1v17M5 1v17" stroke="#b03050" strokeWidth="2" strokeDasharray="2 1.500" /><path d="M8.500 1v15" stroke="#30a050" strokeWidth="2" strokeDasharray="2 1.500" /><path d="M12 1v13" stroke="#3040a0" strokeWidth="2" strokeDasharray="2 1.500" />
        <path d="M17 24h4v6h-4z" fill="#8c1a1a" /><path d="M23 21h4v9h-4z" fill="#1a8030" /><path d="M29 17h4v13h-4z" fill="#1a2a9c" />
        <path d="M4 28l15-14" stroke="#8c8418" strokeWidth="5" strokeLinecap="round" /><path d="M23 8a5 5 0 104 6" fill="none" stroke="#8c8418" strokeWidth="4" />
      </g>
    ),
  },
]

const SideTabs = () => (
  <div className="flex w-[26px] shrink-0 flex-col items-end bg-[#f0f0f0]">
    <div className="flex w-full flex-col items-center gap-[5px] pt-1 pl-1">
      {['M1 2h14M1 12l7-7 7 7z', 'M1 12l7-7 7 7z', 'M1 5l7 7 7-7z', 'M1 13h14M1 3l7 7 7-7z'].map((d) => (
        <button key={d} type="button" aria-label="滚动" className="grid h-[9px] place-items-center"><Ico className="h-[7px] w-[7px]"><path d={d} fill="#222" strokeWidth="2" /></Ico></button>
      ))}
    </div>
    <button type="button" className="grid w-[22px]">
      <svg viewBox="0 0 22 44" className="col-start-1 row-start-1 h-11 w-[22px]"><path d="M22 0L1 10v23l21 10" fill="#fff" stroke="#777" /></svg>
      <span className="col-start-1 row-start-1 place-self-center text-xs font-bold [text-orientation:sideways] [writing-mode:vertical-rl]">所有</span>
    </button>
    <button type="button" className="-mt-1 grid w-[22px]">
      <svg viewBox="0 0 22 54" className="col-start-1 row-start-1 h-[54px] w-[22px]"><path d="M11 1L1 6v37l21 10" fill="#f0f0f0" stroke="#777" /></svg>
      <span className="col-start-1 row-start-1 place-self-center text-xs [text-orientation:sideways] [writing-mode:vertical-rl]">连接器</span>
    </button>
    <span className="w-px flex-1 bg-[#888]" />
  </div>
)

const AppsPanel = () => (
  <section className="flex min-h-0 flex-1 flex-col">
    <PanelHeader title="Apps" />
    <div className="mr-0.5 flex min-h-0 flex-1 border-t border-[#888] bg-white">
      <SideTabs />
      <ul className="grid min-w-0 flex-1 auto-rows-[78px] grid-cols-[78px_78px] overflow-hidden pt-[5px] pl-px">
        {apps.map(({ label, name, icon }) => (
          <li key={label || name}>
            <button
              type="button"
              aria-label={name}
              className="flex h-[78px] w-full flex-col items-center gap-1 text-[13px] leading-4 whitespace-pre"
            >
              <svg viewBox="0 0 33 33" className="h-[33px] w-[33px] shrink-0" aria-hidden="true">{icon}</svg>
              {label}
            </button>
          </li>
        ))}
      </ul>
      <div className="flex w-[17px] flex-col bg-[#f0f0f0]">
        <Chevron />
        <span className="h-[246px] bg-[#cdcdcd]" />
      </div>
    </div>
  </section>
)

const App = () => (
  <div className="h-screen overflow-hidden bg-white px-[3px] pt-[3px] font-['Noto_Sans','Noto_Sans_CJK_SC',sans-serif] text-[#1a1a1a]">
    <div className="flex h-full flex-col border border-b-0 border-[#777]">
      <TitleBar />
      <MenuBar />
      <Toolbars />
      <main className="flex min-h-0 flex-1 bg-[#e6e6f4]">
        <div className="flex w-[22px] shrink-0 flex-col gap-2 bg-[#ebebfc]">
          <DockTab className="h-[114px] pt-[5px]">项目管理器   (1)</DockTab>
          <DockTab className="h-[78px] pt-2">消息日志</DockTab>
          <DockTab className="h-[78px] pt-2">提示日志</DockTab>
        </div>
        <LeftTools />
        <div className="flex min-w-0 flex-1 flex-col border-t-2 border-l-2 border-[#8a8a8a] bg-[#ababab] pt-[5px] pr-4 pl-1.5">
          <GraphWindow />
        </div>
        <RightTools />
        <aside className="ml-1 flex w-[217px] shrink-0 flex-col gap-1 pt-px">
          <ObjectManager />
          <AppsPanel />
        </aside>
      </main>
    </div>
  </div>
)

export default App
